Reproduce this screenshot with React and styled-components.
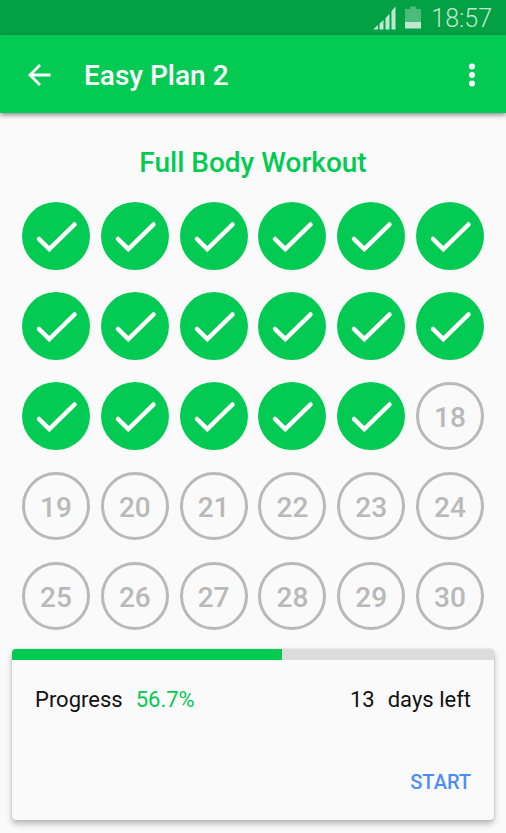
import React, { useState } from 'react';
import styled, { createGlobalStyle } from 'styled-components';

const GlobalStyle = createGlobalStyle`
  * {
    box-sizing: border-box;
  }

  body {
    margin: 0;
    background: #fafafa;
    color: #111;
    font-family: Roboto, 'Liberation Sans', sans-serif;
  }

  button {
    padding: 0;
    border: none;
    background: none;
    font-family: inherit;
    cursor: pointer;
  }
`;

const StatusBar = styled.div`
  display: flex;
  align-items: center;
  justify-content: flex-end;
  height: 35px;
  padding: 0 14px 0 0;
  background: #03a044;
  color: #bfe7cf;

  svg {
    display: block;
  }
`;

const Clock = styled.time`
  margin-left: 10px;
  padding-top: 3px;
  font-size: 25px;
  font-weight: 300;
  line-height: 32px;
`;

const Signal = styled.svg`
  margin-right: 8px;
`;

const Toolbar = styled.header`
  display: flex;
  align-items: center;
  height: 78px;
  padding: 2px 18px 0 24px;
  background: #03ca53;
  color: #fff;
  box-shadow: 0 2px 5px rgba(0, 0, 0, 0.45);
`;

const IconButton = styled.button`
  display: flex;
  flex: none;
  color: inherit;
`;

const PlanName = styled.h1`
  flex: 1;
  margin: 0 0 0 28px;
  padding-top: 2px;
  font-size: 28px;
  font-weight: 500;
  line-height: 32px;
`;

const Content = styled.main`
  padding: 34px 12px 12px;
`;

const WorkoutTitle = styled.h2`
  margin: 0 0 23px;
  color: #03ca53;
  font-size: 28px;
  font-weight: 500;
  line-height: 32px;
  text-align: center;
`;

const Days = styled.ol`
  display: grid;
  grid-template-columns: repeat(6, 68px);
  justify-content: space-between;
  row-gap: 22px;
  margin: 0 0 19px;
  padding: 0 10px;
  list-style: none;
`;

const Day = styled.button`
  display: flex;
  align-items: center;
  justify-content: center;
  width: 68px;
  height: 68px;
  border-radius: 50%;

  && {
    padding-top: ${({ $done }) => ($done ? '0' : '3px')};
    border: ${({ $done }) => ($done ? 'none' : '3px solid #b9b9b9')};
    background: ${({ $done }) => ($done ? '#03ca53' : 'transparent')};
  }

  color: ${({ $done }) => ($done ? '#fff' : '#b9b9b9')};
  font-size: 28px;
  font-weight: 500;
  line-height: 32px;
`;

const Card = styled.section`
  overflow: hidden;
  border-radius: 4px;
  background: #fafafa;
  box-shadow: 0 4px 6px rgba(0, 0, 0, 0.25), 0 0 2px rgba(0, 0, 0, 0.2);
`;

const Track = styled.div`
  height: 11px;
  background: #dcdcdc;
`;

const Bar = styled.div`
  height: 100%;
  background: #03ca53;
`;

const Stats = styled.div`
  display: flex;
  justify-content: space-between;
  padding: 26px 23px 0;
  font-size: 22px;
  line-height: 28px;

  p {
    display: flex;
    gap: 13px;
    margin: 0;
  }
`;

const Percent = styled.span`
  color: #03ca53;
`;

const Actions = styled.div`
  display: flex;
  justify-content: flex-end;
  padding: 56px 23px 26px;
`;

const StartButton = styled.button`
  && {
    color: #4c8dfb;
  }
  font-size: 20px;
  font-weight: 500;
  line-height: 24px;
`;

const SignalIcon = () => (
  <Signal width="24" height="24" viewBox="0 0 24 24" fill="currentColor" aria-hidden="true">
    <path d="M0 23.500L5 19v4.500zM6.500 17.500l4-3.500v9.500h-4zM12.500 12l4-4v15.500h-4zM18.500 5l4-4.500v23h-4z" />
  </Signal>
);

const BatteryIcon = () => (
  <svg width="16" height="24" viewBox="0 0 16 24" aria-hidden="true">
    <path d="M5 0.500h6v2.500h5v13H0V3h5z" fill="#4dbc7b" />
    <path d="M0 16h16v6.500H0z" fill="currentColor" />
  </svg>
);

const BackIcon = () => (
  <svg width="32" height="32" viewBox="0 0 32 32" fill="none" stroke="currentColor" aria-hidden="true">
    <path d="M26.500 16H6M16 6L6 16l10 10" strokeWidth="2.800" />
  </svg>
);

const MoreIcon = () => (
  <svg width="32" height="32" viewBox="0 0 32 32" fill="currentColor" aria-hidden="true">
    <circle cx="16" cy="7.500" r="3" />
    <circle cx="16" cy="16" r="3" />
    <circle cx="16" cy="24.500" r="3" />
  </svg>
);

const CheckIcon = () => (
  <svg width="68" height="68" viewBox="0 0 68 68" fill="none" stroke="currentColor" aria-hidden="true">
    <path d="M17 37L27.300 47.200L52.500 22.500" strokeWidth="4.500" strokeLinecap="round" />
  </svg>
);

const TOTAL_DAYS = 30;

const App = () => {
  const [completed, setCompleted] = useState(17);
  const days = Array.from({ length: TOTAL_DAYS }, (_, i) => i + 1);
  const percent = (completed / TOTAL_DAYS) * 100;

  const completeNext = () =>
    setCompleted((count) => Math.min(count + 1, TOTAL_DAYS));

  return (
    <>
      <GlobalStyle />
      <StatusBar>
        <SignalIcon />
        <BatteryIcon />
        <Clock>18:57</Clock>
      </StatusBar>
      <Toolbar>
        <IconButton type="button" aria-label="Back">
          <BackIcon />
        </IconButton>
        <PlanName>Easy Plan 2</PlanName>
        <IconButton type="button" aria-label="More options">
          <MoreIcon />
        </IconButton>
      </Toolbar>
      <Content>
        <WorkoutTitle>Full Body Workout</WorkoutTitle>
        <Days>
          {days.map((day) => (
            <li key={day}>
              <Day
                type="button"
                $done={day <= completed}
                aria-label={day <= completed ? `Day ${day}, done` : `Day ${day}`}
              >
                {day <= completed ? <CheckIcon /> : day}
              </Day>
            </li>
          ))}
        </Days>
        <Card>
          <Track
            role="progressbar"
            aria-label="Plan progress"
            aria-valuenow={Math.floor(percent)}
            aria-valuemin={0}
            aria-valuemax={100}
          >
            {/* the bar moves in whole percents */}
            <Bar style={{ width: `${Math.floor(percent)}%` }} />
          </Track>
          <Stats>
            <p>
              <span>Progress</span>
              <Percent>{percent.toFixed(1)}%</Percent>
            </p>
            <p>
              <span>{TOTAL_DAYS - completed}</span>
              <span>days left</span>
            </p>
          </Stats>
          <Actions>
            <StartButton type="button" onClick={completeNext}>
              START
            </StartButton>
          </Actions>
        </Card>
      </Content>
    </>
  );
};

export default App;
